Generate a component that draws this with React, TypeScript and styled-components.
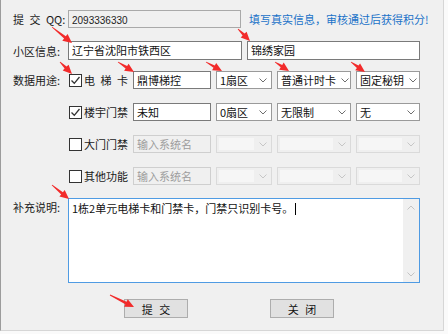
import React from "react";
import styled, { createGlobalStyle } from "styled-components";

const GlobalStyle = createGlobalStyle`
  html, body {
    margin: 0;
    padding: 0;
    background: #fafafa;
  }
  body {
    font-family: "Liberation Sans", "Noto Sans CJK SC", sans-serif;
    font-size: 11px;
    color: #000;
  }
`;

const Window = styled.div`
  position: relative;
  box-sizing: border-box;
  width: 444px;
  height: 331px;
  background: #f0f0f0;
  border-left: 1px solid #9c9c9c;
  border-right: 1px solid #d6d6d6;
  border-bottom: 1px solid #d6d6d6;
  padding: 10px 0 0 12px;
  display: flex;
  flex-direction: column;
`;

const Row = styled.div<{ $mt?: number; $h?: number }>`
  display: flex;
  align-items: center;
  height: ${p => p.$h ?? 18}px;
  margin-top: ${p => p.$mt ?? 0}px;
`;

const Label = styled.div<{ $top?: boolean }>`
  width: 55px;
  flex: none;
  font-family: "Noto Sans CJK SC", sans-serif;
  font-size: 11px;
  line-height: 18px;
  color: #1a1a1a;
  white-space: pre;
  word-spacing: 3px;
  align-self: ${p => (p.$top ? "flex-start" : "center")};
`;

const Field = styled.div<{ $w: number; $off?: boolean; $ro?: boolean }>`
  box-sizing: border-box;
  width: ${p => p.$w}px;
  height: 100%;
  flex: none;
  border: 1px solid ${p => (p.$off ? "#cfcfcf" : p.$ro ? "#a9a9a9" : "#7a7a7a")};
  background: ${p => (p.$off || p.$ro ? "#f0f0f0" : "#fff")};
  color: ${p => (p.$off ? "#9d9d9d" : "#111")};
  padding: 0 3px;
  font-family: "Noto Sans CJK SC", sans-serif;
  font-size: 11px;
  line-height: 16px;
  white-space: nowrap;
  overflow: hidden;
`;

const QQText = styled.span`
  font-family: "Liberation Sans", sans-serif;
  font-size: 10px;
  color: #222;
`;

const Notice = styled.div`
  margin-left: 8px;
  font-family: "Noto Sans CJK SC", sans-serif;
  font-size: 11px;
  color: #1a72c8;
  white-space: nowrap;
`;

const Combo = styled.div<{ $w: number; $off?: boolean }>`
  box-sizing: border-box;
  width: ${p => p.$w}px;
  height: 100%;
  flex: none;
  margin-left: 5px;
  display: flex;
  align-items: center;
  border: 1px solid ${p => (p.$off ? "#dadada" : "#9a9a9a")};
  background: ${p => (p.$off ? "#efefef" : "#fff")};
  padding: ${p => (p.$off ? "2px 0 2px 2px" : "0 0 0 3px")};
  font-family: "Noto Sans CJK SC", sans-serif;
  font-size: 11px;
  color: #111;
  white-space: nowrap;
`;

const ComboValue = styled.div<{ $off?: boolean }>`
  flex: 1;
  height: 100%;
  background: ${p => (p.$off ? "#f6f6f6" : "transparent")};
  line-height: ${p => (p.$off ? "12px" : "16px")};
`;

const Chevron = styled.div<{ $off?: boolean }>`
  width: 17px;
  flex: none;
  display: flex;
  justify-content: center;
  svg {
    stroke: ${p => (p.$off ? "#c6c6c6" : "#6e6e6e")};
  }
`;

const Check = styled.div`
  box-sizing: border-box;
  width: 13px;
  height: 13px;
  flex: none;
  margin-left: 1px;
  border: 1px solid #333;
  background: #fff;
  display: flex;
  align-items: center;
  justify-content: center;
`;

const CheckLabel = styled.div`
  width: 49px;
  flex: none;
  margin-left: 2px;
  font-family: "Noto Sans CJK SC", sans-serif;
  font-size: 11px;
  color: #1a1a1a;
  white-space: pre;
  word-spacing: 3px;
`;

const Memo = styled.div`
  box-sizing: border-box;
  width: 352px;
  height: 85px;
  display: flex;
  border: 1px solid #4f9be3;
  background: #fff;
`;

const MemoText = styled.div`
  flex: 1;
  padding: 1px 3px;
  font-family: "Noto Sans CJK SC", sans-serif;
  font-size: 11px;
  line-height: 16px;
  color: #111;
`;

const Caret = styled.span`
  display: inline-block;
  width: 1px;
  height: 12px;
  margin-left: 2px;
  vertical-align: -2px;
  background: #000;
`;

const ScrollBar = styled.div`
  width: 16px;
  background: #f0f0f0;
  display: flex;
  flex-direction: column;
  justify-content: space-between;
  align-items: center;
  padding: 6px 0 5px;
  svg {
    stroke: #c3c3c3;
  }
`;

const ButtonRow = styled.div`
  display: flex;
  height: 19px;
  margin-top: 16px;
  padding-left: 111px;
  gap: 82px;
`;

const Button = styled.div`
  box-sizing: border-box;
  width: 64px;
  height: 19px;
  border: 1px solid #adadad;
  background: #e1e1e1;
  display: flex;
  align-items: center;
  justify-content: center;
  font-family: "Noto Sans CJK SC", sans-serif;
  font-size: 11px;
  color: #111;
  white-space: pre;
  word-spacing: 4px;
`;

const Overlay = styled.svg`
  position: absolute;
  left: -1px;
  top: 0;
  pointer-events: none;
`;

const ChevronIcon = ({ up }: { up?: boolean }) => (
  <svg width="8" height="5" viewBox="0 0 8 5" fill="none" strokeWidth="1">
    <polyline points={up ? "0.5,4.5 4,1 7.5,4.5" : "0.5,0.5 4,4 7.5,0.5"} />
  </svg>
);

const CheckBox = ({ on }: { on?: boolean }) => (
  <Check>
    {on && (
      <svg width="11" height="11" viewBox="0 0 11 11" fill="none" stroke="#333" strokeWidth="1.3">
        <polyline points="1.5,5.5 4.3,8.3 9.5,2" />
      </svg>
    )}
  </Check>
);

const Select = ({ w, value, off }: { w: number; value?: string; off?: boolean }) => (
  <Combo $w={w} $off={off}>
    <ComboValue $off={off}>{value}</ComboValue>
    <Chevron $off={off}>
      <ChevronIcon />
    </Chevron>
  </Combo>
);

type Arrow = [number, number, number, number];

const arrows: Arrow[] = [
  [52, 27, 72, 43],
  [238, 29, 250, 41],
  [60, 62, 72, 74],
  [118, 62, 134, 72],
  [206, 62, 222, 71],
  [275, 62, 289, 71],
  [351, 62, 365, 72],
  [52, 185, 69, 199],
  [110, 295, 134, 307],
];

// tapered red annotation arrow, tip at (x2, y2)
function arrowPoints([x1, y1, x2, y2]: Arrow) {
  const dx = x2 - x1;
  const dy = y2 - y1;
  const len = Math.hypot(dx, dy);
  const ux = dx / len;
  const uy = dy / len;
  const nx = -uy;
  const ny = ux;
  const head = 9;
  const bx = x2 - ux * head;
  const by = y2 - uy * head;
  const p = (x: number, y: number) => `${x.toFixed(1)},${y.toFixed(1)}`;
  return [
    p(x1 + nx * 0.4, y1 + ny * 0.4),
    p(bx + nx * 1.4, by + ny * 1.4),
    p(bx + nx * 4.2, by + ny * 4.2),
    p(x2, y2),
    p(bx - nx * 4.2, by - ny * 4.2),
    p(bx - nx * 1.4, by - ny * 1.4),
    p(x1 - nx * 0.4, y1 - ny * 0.4),
  ].join(" ");
}

const usages = [
  { name: "电 梯 卡", on: true, sys: "鼎博梯控", a: "1扇区", b: "普通计时卡", c: "固定秘钥" },
  { name: "楼宇门禁", on: true, sys: "未知", a: "0扇区", b: "无限制", c: "无" },
  { name: "大门门禁", on: false },
  { name: "其他功能", on: false },
];

const App: React.FC = () => {
  return (
    <>
      <GlobalStyle />
      <Window>
        <Row>
          <Label>提 交 QQ:</Label>
          <Field $w={173} $ro>
            <QQText>2093336330</QQText>
          </Field>
          <Notice>填写真实信息，审核通过后获得积分!</Notice>
        </Row>
        <Row $mt={13} $h={19}>
          <Label>小区信息:</Label>
          <Field $w={174}>辽宁省沈阳市铁西区</Field>
          <Field $w={173} style={{ marginLeft: 5 }}>
            锦绣家园
          </Field>
        </Row>
        {usages.map((u, i) => (
          <Row key={u.name} $mt={i === 0 ? 11 : 14}>
            <Label>{i === 0 ? "数据用途:" : ""}</Label>
            <CheckBox on={u.on} />
            <CheckLabel>{u.name}</CheckLabel>
            {u.on ? (
              <Field $w={78}>{u.sys}</Field>
            ) : (
              <Field $w={78} $off>
                输入系统名
              </Field>
            )}
            <Select w={56} value={u.a} off={!u.on} />
            <Select w={74} value={u.b} off={!u.on} />
            <Select w={64} value={u.c} off={!u.on} />
          </Row>
        ))}
        <Row $mt={13} $h={85}>
          <Label $top>补充说明:</Label>
          <Memo>
            <MemoText>
              1栋2单元电梯卡和门禁卡，门禁只识别卡号。
              <Caret />
            </MemoText>
            <ScrollBar>
              <ChevronIcon up />
              <ChevronIcon />
            </ScrollBar>
          </Memo>
        </Row>
        <ButtonRow>
          <Button>提 交</Button>
          <Button>关 闭</Button>
        </ButtonRow>
        <Overlay width="448" height="334">
          {arrows.map((a, i) => (
            <polygon key={i} points={arrowPoints(a)} fill="#f22b2b" />
          ))}
        </Overlay>
      </Window>
    </>
  );
};

export default App;
